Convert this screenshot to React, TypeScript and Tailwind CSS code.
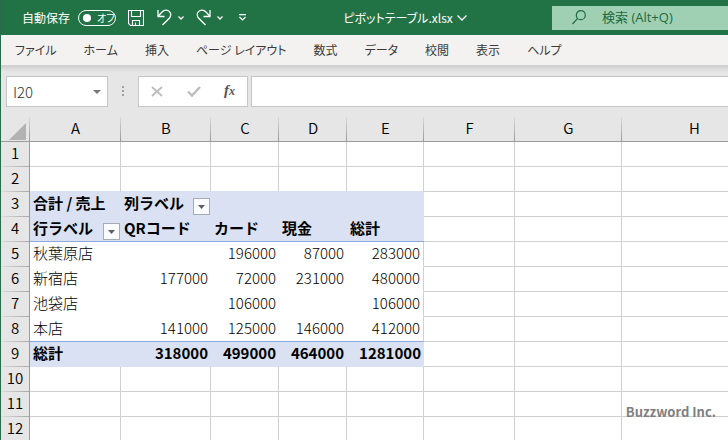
import React, { useState } from "react";

const TABS = ["ファイル", "ホーム", "挿入", "ページ レイアウト", "数式", "データ", "校閲", "表示", "ヘルプ"];
const COLUMNS = ["A", "B", "C", "D", "E", "F", "G", "H"];
const ROW_COUNT = 12;
const PIVOT_COLS = 5;

const CELLS: Record<number, string[]> = {
    3: ["合計 / 売上", "列ラベル"],
    4: ["行ラベル", "QRコード", "カード", "現金", "総計"],
    5: ["秋葉原店", "", "196000", "87000", "283000"],
    6: ["新宿店", "177000", "72000", "231000", "480000"],
    7: ["池袋店", "", "106000", "", "106000"],
    8: ["本店", "141000", "125000", "146000", "412000"],
    9: ["総計", "318000", "499000", "464000", "1281000"],
};

const FilterButton = ({ label }: { label: string }) => (
    <button
        aria-label={label}
        className="mb-px flex h-[17px] w-[17px] shrink-0 items-center justify-center border border-[#a6abb5] bg-[#fafbfe]"
    >
        <svg width="7" height="4" viewBox="0 0 7 4">
            <path d="M0 0h7L3.5 4z" fill="#606060" />
        </svg>
    </button>
);

const SmallChevron = () => (
    <svg width="6" height="4" viewBox="0 0 6 4" fill="none" stroke="#fff" strokeWidth="1.3">
        <path d="M0.5 0.5L3 3L5.5 0.5" />
    </svg>
);

const TitleBar = () => {
    const [autoSave, setAutoSave] = useState(false);

    return (
        <header className="flex h-[35px] items-center bg-[#217346] pl-[21px] text-white">
            <label className="flex shrink-0 items-center gap-2 text-xs">
                自動保存
                <span className="flex h-4 w-[38px] items-center gap-1.5 rounded-full border border-white pl-1 text-[10px]">
                    <input
                        type="checkbox"
                        checked={autoSave}
                        onChange={e => setAutoSave(e.target.checked)}
                        className="h-2 w-2 shrink-0 appearance-none rounded-full bg-white"
                    />
                    <span className="whitespace-nowrap [font-feature-settings:'palt']">オフ</span>
                </span>
            </label>

            <div className="flex shrink-0 items-center pl-3">
                <button aria-label="上書き保存">
                    <svg width="16" height="16" viewBox="0 0 16 16" fill="none" stroke="#fff" strokeWidth="1.1">
                        <path d="M0.5 0.5h15v15H2.5l-2-2z" />
                        <path d="M3.5 0.5v6h9v-6" />
                        <path d="M4.5 15.5v-5h7v5M7.5 12.5v3" />
                    </svg>
                </button>
                <button aria-label="元に戻す" className="ml-[13px] flex items-center gap-1.5">
                    <svg width="15" height="17" viewBox="0 0 15 17" fill="none" stroke="#fff" strokeWidth="1.3">
                        <path d="M1 1v6.5h6.5" />
                        <path d="M1.2 7.2L5 3c2.4-2.6 5.5-2.4 7.3-.6c2 2 1.9 4.9 0 6.8L5.5 16" />
                    </svg>
                    <SmallChevron />
                </button>
                <button aria-label="やり直し" className="ml-3 flex items-center gap-1.5">
                    <svg width="15" height="17" viewBox="0 0 15 17" fill="none" stroke="#fff" strokeWidth="1.3">
                        <path d="M14 1v6.5H7.5" />
                        <path d="M13.8 7.2L10 3C7.6.4 4.5.6 2.7 2.4c-2 2-1.9 4.9 0 6.8L9.5 16" />
                    </svg>
                    <SmallChevron />
                </button>
                <button aria-label="クイック アクセス ツール バーのカスタマイズ" className="ml-4">
                    <svg width="7" height="7" viewBox="0 0 7 7" fill="none" stroke="#fff" strokeWidth="1.1">
                        <path d="M0 0.6h7M0.5 3L3.5 6L6.5 3" />
                    </svg>
                </button>
            </div>

            <div className="flex flex-1 justify-center pl-3">
                <button className="flex items-center gap-1 text-xs [font-feature-settings:'palt']">
                    ピボットテーブル.xlsx
                    <svg width="10" height="6" viewBox="0 0 10 6" fill="none" stroke="#fff" strokeWidth="1.3">
                        <path d="M0.5 0.5L5 5L9.5 0.5" />
                    </svg>
                </button>
            </div>

            <div className="flex h-6 w-44 shrink-0 items-center gap-4 bg-[#a0d0b3] pl-5">
                <svg width="14" height="15" viewBox="0 0 14 15" fill="none" stroke="#1b6a3f" strokeWidth="1.2" className="shrink-0">
                    <circle cx="8.8" cy="5.2" r="4.5" />
                    <path d="M5.6 8.4L0.5 14" />
                </svg>
                <input
                    type="search"
                    aria-label="検索"
                    placeholder="検索 (Alt+Q)"
                    className="w-full min-w-0 bg-transparent font-['Open_Sans','Noto_Sans_CJK_JP',sans-serif] text-[13px] outline-none placeholder:text-[#1b6a3f]"
                />
            </div>
        </header>
    );
};

const FormulaBar = () => (
    <div className="flex h-[52px] items-start bg-[linear-gradient(#cfcdcd,#e6e6e6_7px)] pt-[11px]">
        <div className="ml-[5px] flex h-[31px] w-[102px] items-center border border-[#c6c6c6] bg-white px-1.5">
            <input aria-label="名前ボックス" defaultValue="I20" className="w-full min-w-0 pt-0.5 font-light text-[#333] outline-none" />
            <button aria-label="名前の一覧">
                <svg width="8" height="4" viewBox="0 0 8 4">
                    <path d="M0 0h8L4 4z" fill="#777" />
                </svg>
            </button>
        </div>
        <svg width="2" height="10" viewBox="0 0 2 10" fill="#a0a0a0" className="mx-3.5 mt-2.5">
            <path d="M0 0h2v2H0zM0 4h2v2H0zM0 8h2v2H0z" />
        </svg>
        <div className="flex h-[31px] w-[110px] items-center justify-between border border-[#c6c6c6] bg-white px-3">
            <button aria-label="キャンセル">
                <svg width="12" height="11" viewBox="0 0 12 11" fill="none" stroke="#bdbdbd" strokeWidth="1.8">
                    <path d="M1 1l10 9M11 1L1 10" />
                </svg>
            </button>
            <button aria-label="入力">
                <svg width="14" height="11" viewBox="0 0 14 11" fill="none" stroke="#bdbdbd" strokeWidth="2.4">
                    <path d="M1 5.5l4 4L13 1" />
                </svg>
            </button>
            <button
                aria-label="関数の挿入"
                className="flex items-baseline pb-0.5 font-['Liberation_Serif',serif] text-[15px] leading-4 font-bold text-[#555] italic"
            >
                f<span className="text-xs">x</span>
            </button>
        </div>
        <input
            aria-label="数式バー"
            className="ml-[3px] h-[31px] min-w-0 flex-1 border border-r-0 border-[#c6c6c6] bg-white px-2 outline-none"
        />
    </div>
);

const cellClass = (row: number, col: number) => {
    const inPivot = row >= 3 && row <= 9 && col < PIVOT_COLS;
    if (!inPivot) {
        // the fill of the pivot header covers the gridline above it
        if (row === 2 && col < PIVOT_COLS) return "border-r border-b border-r-[#d0d0d0] border-b-[#d9e1f2]";
        return "border-r border-b border-[#d0d0d0]";
    }
    if (row === 3 || row === 9) return "border-b border-[#d9e1f2] bg-[#d9e1f2] font-bold";
    if (row === 4) return "border-b border-[#8ea9db] bg-[#d9e1f2] font-bold";
    const edge = col === PIVOT_COLS - 1 ? "border-r border-r-[#d0d0d0]" : "";
    if (row === 8) return `border-b border-b-[#8ea9db] font-light ${edge}`;
    return `border-b border-b-white font-light ${edge}`;
};

const Sheet = () => (
    <div className="relative overflow-hidden">
        <table className="w-full min-w-[766px] table-fixed border-separate border-spacing-0 leading-5 text-black">
            <colgroup>
                <col className="w-[29px]" />
                <col className="w-[91px]" />
                <col className="w-[90px]" />
                <col className="w-[68px]" />
                <col className="w-[68px]" />
                <col className="w-[77px]" />
                <col className="w-[91px]" />
                <col className="w-[107px]" />
                <col />
            </colgroup>
            <thead>
                <tr className="h-[25px] bg-[#e6e6e6]">
                    <td className="border-b border-[#9b9b9b] bg-[linear-gradient(#d8d8d8,#9b9b9b)] bg-[length:1px_100%] bg-right bg-no-repeat p-0">
                        <svg width="17" height="17" viewBox="0 0 17 17" className="ml-2 mt-1">
                            <path d="M17 0v17H0z" fill="#b2b2b2" />
                        </svg>
                    </td>
                    {COLUMNS.map(name => (
                        <th
                            key={name}
                            scope="col"
                            className="border-b border-[#9b9b9b] bg-[linear-gradient(#d8d8d8,#9b9b9b)] bg-[length:1px_100%] bg-right bg-no-repeat p-0 pb-0.5 font-[350]"
                        >
                            {name}
                        </th>
                    ))}
                </tr>
            </thead>
            <tbody>
                {Array.from({ length: ROW_COUNT }, (_, i) => i + 1).map(row => (
                    <tr key={row} className="h-[25px]">
                        <th
                            scope="row"
                            className="border-r border-[#9b9b9b] bg-[#e6e6e6] bg-[linear-gradient(90deg,#dcdcdc,#a8a8a8)] bg-[length:100%_1px] bg-bottom bg-no-repeat p-0 pb-[3px] font-[350]"
                        >
                            {row}
                        </th>
                        {COLUMNS.map((name, col) => {
                            const value = CELLS[row]?.[col] ?? "";
                            const isNumber = /^\d+$/.test(value);
                            const hasFilter = (row === 3 && col === 1) || (row === 4 && col === 0);
                            return (
                                <td
                                    key={name}
                                    className={`pt-0 pr-[3px] pl-[3px] whitespace-nowrap ${hasFilter ? "pb-0" : "pb-[3px]"} ${isNumber ? "text-right" : "text-left"} ${cellClass(row, col)}`}
                                >
                                    {hasFilter ? (
                                        <div className="-mr-0.5 flex h-6 items-end justify-between">
                                            <span className="self-center pb-[3px]">{value}</span>
                                            <FilterButton label={value} />
                                        </div>
                                    ) : (
                                        value
                                    )}
                                </td>
                            );
                        })}
                    </tr>
                ))}
            </tbody>
        </table>
        <span className="absolute right-3 bottom-5 font-['Noto_Sans_CJK_JP',sans-serif] text-[13px] leading-5 font-bold text-[#7f7f7f]">
            Buzzword Inc.
        </span>
    </div>
);

export default function App() {
    return (
        <div className="min-h-screen overflow-hidden border-l border-[#2b6a4c] bg-white font-['Noto_Sans_CJK_JP',sans-serif] text-[15px]">
            <TitleBar />
            <nav className="flex h-[30px] items-center gap-[27px] bg-[#f3f2f1] pl-3.5 text-xs text-[#3b3a39] [font-feature-settings:'palt']">
                {TABS.map(tab => (
                    <button key={tab} className="whitespace-nowrap">
                        {tab}
                    </button>
                ))}
            </nav>
            <FormulaBar />
            <Sheet />
        </div>
    );
}
